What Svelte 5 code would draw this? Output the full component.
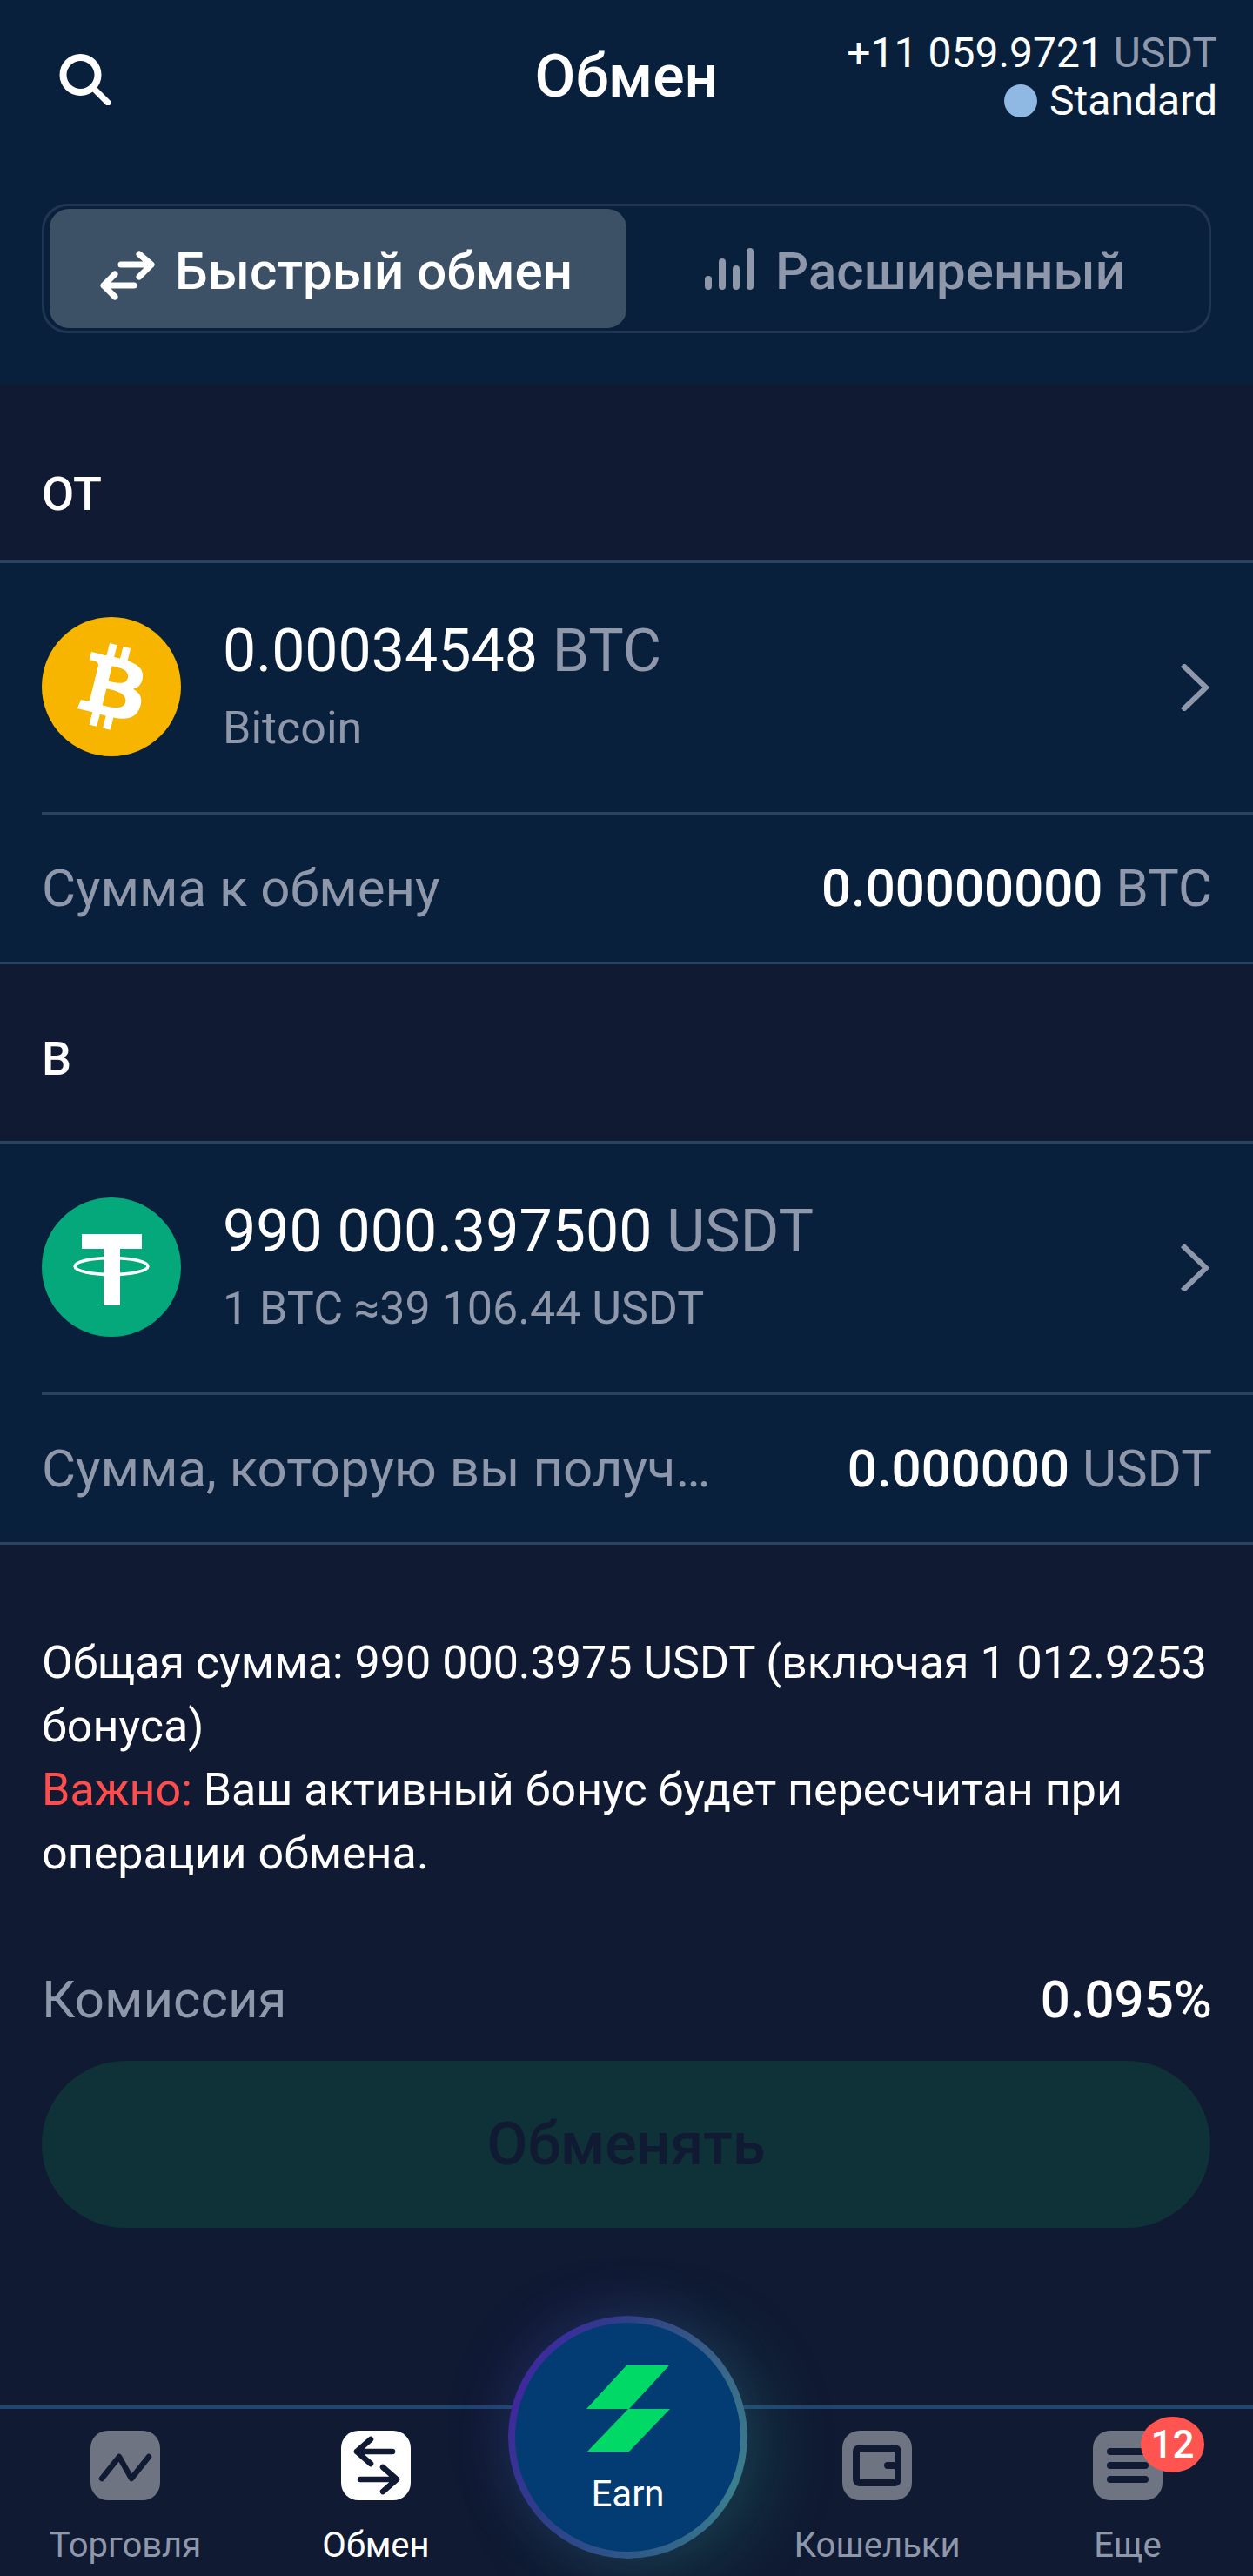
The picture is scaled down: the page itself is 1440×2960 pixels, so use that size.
<script lang="ts">
	const navItems = [
		{ key: 'trade', label: 'Торговля' },
		{ key: 'swap', label: 'Обмен', active: true },
		{ key: 'earn', label: '' },
		{ key: 'wallets', label: 'Кошельки' },
		{ key: 'more', label: 'Еще', badge: 12 },
	];
</script>

<div class="page">
	<header class="top">
		<div class="bar">
			<svg class="search" viewBox="0 0 60 66" width="60" height="66">
				<circle cx="25.500" cy="31" r="20" fill="none" stroke="#fff" stroke-width="8" />
				<path d="M40 46 L57 63" stroke="#fff" stroke-width="7" stroke-linecap="round" />
			</svg>
			<h1>Обмен</h1>
			<div class="balance">
				<div>+11 059.9721 <span class="muted">USDT</span></div>
				<div class="level"><i class="dot"></i>Standard</div>
			</div>
		</div>
		<div class="tabs">
			<button class="tab active">
				<svg class="tab-swap" viewBox="0 0 60 70" width="60" height="70">
					<path d="M20 30 H55 M41 18 L55 30 L41 44 M35 54 H0 M13 41 L0 54 L13 67" fill="none" stroke="#fff" stroke-width="7" stroke-linecap="round" stroke-linejoin="round" />
				</svg>
				<span>Быстрый обмен</span>
			</button>
			<button class="tab second">
				<svg viewBox="0 0 56 48" width="56" height="48">
					<path d="M4 44 V36 M20 44 V16 M36 44 V24 M52 44 V4" fill="none" stroke="#8f97ab" stroke-width="8" stroke-linecap="round" />
				</svg>
				<span>Расширенный</span>
			</button>
		</div>
	</header>

	<div class="section-label">ОТ</div>
	<section class="panel">
		<div class="coin-row">
			<svg class="coin" viewBox="0 0 32 32" width="160" height="160">
				<circle cx="16" cy="16" r="16" fill="#f7b500" />
				<path fill="#fff" d="M23.189 14.020c.314-2.096-1.283-3.223-3.465-3.975l.708-2.840-1.728-.430-.690 2.765c-.454-.114-.920-.220-1.385-.326l.695-2.783L15.596 6l-.708 2.839c-.376-.086-.746-.170-1.104-.260l.002-.009-2.384-.595-.460 1.846s1.283.294 1.256.312c.700.175.826.638.805 1.006l-.806 3.235c.048.012.110.030.180.057l-.183-.045-1.130 4.532c-.086.212-.303.531-.793.410.018.025-1.256-.313-1.256-.313l-.858 1.978 2.250.561c.418.105.828.215 1.231.318l-.715 2.872 1.727.430.708-2.840c.472.127.930.245 1.378.357l-.706 2.828 1.728.430.715-2.866c2.948.558 5.164.333 6.097-2.333.752-2.146-.037-3.385-1.588-4.192 1.130-.260 1.980-1.003 2.207-2.538zm-3.950 5.538c-.533 2.147-4.148.986-5.320.695l.950-3.805c1.172.293 4.929.872 4.370 3.110zm.535-5.569c-.487 1.953-3.495.960-4.470.717l.860-3.450c.975.243 4.118.696 3.610 2.733z" />
			</svg>
			<div class="coin-text">
				<div class="amount">0.00034548 <span class="muted">BTC</span></div>
				<div class="sub">Bitcoin</div>
			</div>
			<svg class="chevron" viewBox="0 0 36 54" width="36" height="54">
				<path d="M4 1 L31 27 L4 53" fill="none" stroke="#8f97ab" stroke-width="6" />
			</svg>
		</div>
		<div class="sum-row">
			<span class="sum-label">Сумма к обмену</span>
			<span class="sum-value"><b>0.00000000</b> <span class="muted">BTC</span></span>
		</div>
	</section>

	<div class="section-label to">В</div>
	<section class="panel">
		<div class="coin-row">
			<svg class="coin" viewBox="0 0 160 160" width="160" height="160">
				<circle cx="80" cy="80" r="80" fill="#05a87a" />
				<path fill="#fff" d="M46 42 H115 V59 H90 V124 H71 V59 H46 Z" />
				<ellipse cx="80" cy="79" rx="42" ry="9.500" fill="none" stroke="#fff" stroke-width="3.500" />
			</svg>
			<div class="coin-text">
				<div class="amount">990 000.397500 <span class="muted">USDT</span></div>
				<div class="sub">1 BTC ≈39 106.44 USDT</div>
			</div>
			<svg class="chevron" viewBox="0 0 36 54" width="36" height="54">
				<path d="M4 1 L31 27 L4 53" fill="none" stroke="#8f97ab" stroke-width="6" />
			</svg>
		</div>
		<div class="sum-row">
			<span class="sum-label">Сумма, которую вы получите</span>
			<span class="sum-value"><b>0.000000</b> <span class="muted">USDT</span></span>
		</div>
	</section>

	<div class="notice">
		Общая сумма: 990 000.3975 USDT (включая 1 012.9253 бонуса)<br />
		<span class="warn">Важно:</span> Ваш активный бонус будет пересчитан при операции обмена.
	</div>

	<div class="fee">
		<span class="fee-label">Комиссия</span>
		<b>0.095%</b>
	</div>

	<button class="submit" disabled>Обменять</button>

	<nav class="nav">
		{#each navItems as item}
			{#if item.key === 'earn'}
				<div class="nav-slot"></div>
			{:else}
				<div class="nav-item" class:active={item.active}>
					<div class="nav-icon">
						{#if item.key === 'trade'}
							<svg viewBox="0 0 80 80" width="80" height="80">
								<rect width="80" height="80" rx="20" fill="#6e7482" />
								<path d="M13 55 L33 30 L47 55 L67 30" fill="none" stroke="#101a33" stroke-width="6.500" stroke-linecap="round" stroke-linejoin="round" />
							</svg>
						{:else if item.key === 'swap'}
							<svg viewBox="0 0 80 80" width="80" height="80">
								<rect width="80" height="80" rx="20" fill="#fff" />
								<path d="M59 24 H18 M34 10 L18 24 L34 38 M22 56 H64 M48 42 L64 56 L48 70" fill="none" stroke="#101a33" stroke-width="6.500" stroke-linecap="round" stroke-linejoin="round" />
							</svg>
						{:else if item.key === 'wallets'}
							<svg viewBox="0 0 80 80" width="80" height="80">
								<rect width="80" height="80" rx="20" fill="#6e7482" />
								<rect x="16" y="20" width="48" height="40" rx="4" fill="none" stroke="#101a33" stroke-width="8" />
								<path d="M66 36 H52 a4 4 0 0 0 0 8 H66 Z" fill="#101a33" />
							</svg>
						{:else}
							<svg viewBox="0 0 80 80" width="80" height="80">
								<rect width="80" height="80" rx="20" fill="#6e7482" />
								<path d="M20 24 H60 M20 40 H60 M20 56 H60" stroke="#101a33" stroke-width="8" stroke-linecap="round" />
							</svg>
						{/if}
						{#if item.badge}
							<span class="badge">{item.badge}</span>
						{/if}
					</div>
					<span class="nav-label">{item.label}</span>
				</div>
			{/if}
		{/each}

		<button class="earn">
			<svg viewBox="0 0 100 100" width="100" height="100">
				<path fill="#00d966" d="M48 0 H97 L51 50 H2 Z M50 50 H98 L51 99 H3 Z" />
			</svg>
			<span>Earn</span>
		</button>
	</nav>
</div>

<style>
	:global(body) {
		margin: 0;
		background: #101a33;
	}

	.page {
		position: relative;
		width: 1440px;
		height: 2960px;
		display: flex;
		flex-direction: column;
		background: #101a33;
		color: #fff;
		font-family: Roboto, "Noto Sans", sans-serif;
		overflow: hidden;
	}

	.muted {
		color: #8f97ab;
		font-weight: 400;
	}

	.top {
		height: 441px;
		box-sizing: border-box;
		background: #08203c;
		padding: 0 48px;
		flex-shrink: 0;
	}

	.bar {
		position: relative;
		display: flex;
		align-items: center;
		justify-content: space-between;
		height: 234px;
		padding-bottom: 58px;
		box-sizing: border-box;
	}

	.search {
		margin-left: 19px;
	}

	h1 {
		position: absolute;
		left: 0;
		right: 0;
		top: 53px;
		margin: 0;
		text-align: center;
		font-size: 68px;
		line-height: 70px;
		font-weight: 500;
	}

	.balance {
		margin-right: -7px;
		text-align: right;
		font-size: 48px;
		line-height: 55px;
	}

	.level {
		display: flex;
		align-items: center;
		justify-content: flex-end;
		gap: 14px;
	}

	.dot {
		width: 38px;
		height: 38px;
		border-radius: 50%;
		background: #8fb8e2;
	}

	.tabs {
		display: flex;
		height: 149px;
		box-sizing: border-box;
		border: 3px solid #1f3552;
		border-radius: 30px;
		padding: 3px 6px;
	}

	.tab {
		flex: 1;
		display: flex;
		align-items: center;
		justify-content: center;
		gap: 22px;
		border: none;
		background: none;
		border-radius: 22px;
		color: #8f97ab;
		font: 500 60px Roboto, sans-serif;
		padding: 0;
	}

	.tab span {
		padding-top: 6px;
	}

	.tab.second {
		gap: 25px;
	}

	.tab.active {
		background: #3c5066;
		color: #fff;
	}

	.tab-swap {
		overflow: visible;
	}

	.section-label {
		height: 203px;
		box-sizing: border-box;
		padding: 99px 48px 0;
		font-size: 54px;
		line-height: 56px;
		font-weight: 500;
		flex-shrink: 0;
	}

	.section-label.to {
		padding-top: 81px;
	}

	.panel {
		background: #08203c;
		border-top: 3px solid #2a4360;
		border-bottom: 3px solid #2a4360;
		flex-shrink: 0;
	}

	.coin-row {
		display: flex;
		align-items: center;
		gap: 48px;
		height: 286px;
		box-sizing: border-box;
		padding: 0 49px 0 48px;
	}

	.coin {
		flex-shrink: 0;
		margin-bottom: 3px;
	}

	.coin-text {
		flex: 1;
		padding-bottom: 6px;
	}

	.amount {
		font-size: 68px;
		line-height: 80px;
	}

	.sub {
		margin-top: 19px;
		font-size: 52px;
		line-height: 60px;
		color: #8f97ab;
	}

	.sum-row {
		display: flex;
		align-items: center;
		justify-content: space-between;
		height: 169px;
		margin-left: 48px;
		padding-right: 47px;
		border-top: 3px solid #2a4360;
	}

	.sum-label {
		flex: 1;
		min-width: 0;
		margin-right: 125px;
		font-size: 60px;
		color: #8f97ab;
		white-space: nowrap;
		overflow: hidden;
		text-overflow: ellipsis;
	}

	.sum-value {
		flex-shrink: 0;
		font-size: 60px;
		white-space: nowrap;
	}

	.sum-value b,
	.fee b {
		font-weight: 500;
	}

	.notice {
		margin-top: 99px;
		padding: 0 48px;
		font-size: 52px;
		line-height: 73px;
	}

	.warn {
		color: #ff4d4d;
	}

	.fee {
		display: flex;
		align-items: center;
		justify-content: space-between;
		margin-top: 97px;
		padding: 0 47px 0 48px;
		font-size: 60px;
		line-height: 70px;
	}

	.fee-label {
		color: #8f97ab;
	}

	.submit {
		margin: 35px 49px 0 48px;
		height: 192px;
		flex-shrink: 0;
		border: none;
		border-radius: 96px;
		background: #0f3138;
		color: #101a33;
		font: 500 68px Roboto, sans-serif;
	}

	.nav {
		position: relative;
		margin-top: auto;
		height: 196px;
		flex-shrink: 0;
		box-sizing: border-box;
		display: grid;
		grid-template-columns: repeat(5, 288px);
		border-top: 4px solid #1f4570;
	}

	.nav-item {
		display: flex;
		flex-direction: column;
		align-items: center;
		padding-top: 25px;
		color: #8f97ab;
	}

	.nav-item.active {
		color: #fff;
	}

	.nav-icon {
		position: relative;
		width: 80px;
		height: 80px;
	}

	.nav-icon svg {
		display: block;
	}

	.nav-label {
		margin-top: 27px;
		font-size: 40px;
		line-height: 49px;
		white-space: nowrap;
	}

	.badge {
		position: absolute;
		left: 55px;
		top: -16px;
		width: 73px;
		height: 64px;
		border-radius: 50%;
		background: #ff5450;
		color: #fff;
		font-size: 44px;
		font-weight: 500;
		line-height: 64px;
		text-align: center;
	}

	.earn {
		position: absolute;
		left: 584px;
		top: -107px;
		width: 275px;
		height: 279px;
		padding: 49px 0 0;
		box-sizing: border-box;
		border: 8px solid transparent;
		border-radius: 50%;
		color: #fff;
		font: 400 42px Roboto, sans-serif;
		background:
			linear-gradient(#033b73, #033b73) padding-box,
			conic-gradient(#2f3f85 0deg, #3a6a88 60deg, #3b7f8e 115deg, #2f5a88 175deg, #2d3d8a 230deg, #40289c 285deg, #38309a 330deg, #2f3f85 360deg) border-box;
		box-shadow: 22px 14px 80px rgba(40, 170, 140, 0.26), -14px -12px 60px rgba(70, 40, 170, 0.2);
		display: flex;
		flex-direction: column;
		align-items: center;
	}

	.earn span {
		margin-top: 23px;
		line-height: 49px;
	}
</style>
